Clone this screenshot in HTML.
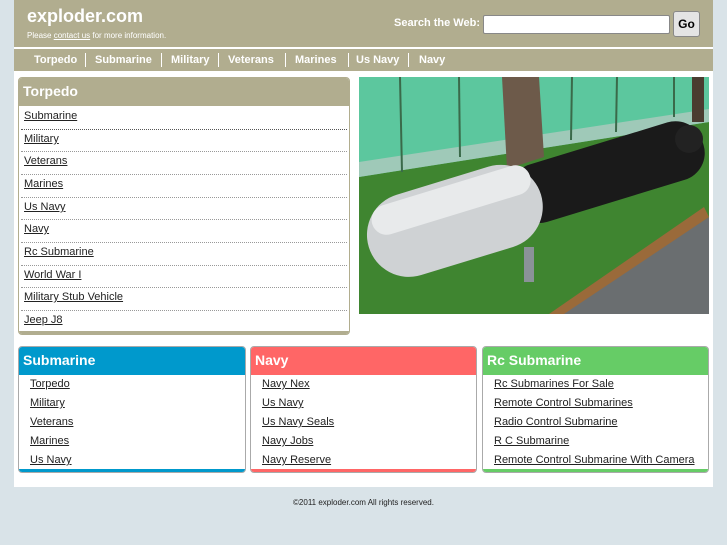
<!DOCTYPE html>
<html><head><style>
*{margin:0;padding:0;box-sizing:border-box}
body{width:727px;height:545px;background:#d9e3e8;font-family:"Liberation Sans",sans-serif;position:relative;overflow:hidden}
.abs{position:absolute}
#wrap{left:14px;top:0;width:699px;height:487px;background:#fff}
#hdr{left:0;top:0;width:699px;height:47px;background:#b1ad8f}
#nav{left:0;top:49px;width:699px;height:22px;background:#b1ad8f;font-size:11px;font-weight:bold;color:#fff;line-height:22px}
#nav span{position:absolute;top:0}
#nav i{position:absolute;top:4px;width:1px;height:14px;background:#fff}
a{color:#222;text-decoration:underline}
.box{border:1px solid #aaa;border-radius:4px;overflow:hidden;background:#fff}
.lt{position:absolute;left:5px;font-size:11px}
.row{position:absolute;left:2px;right:2px;height:0;border-top:1px dotted #999}
.bh{position:absolute;left:0;top:0;right:0;height:28px;color:#fff;font-size:14px;font-weight:bold;padding:5px 4px}
.bl{position:absolute;font-size:11px}
</style></head><body>
<div id="wrap" class="abs">
<div id="hdr" class="abs">
<div class="abs" style="left:13px;top:6px;font-size:18px;font-weight:bold;color:#fff">exploder.com</div>
<div class="abs" style="left:13px;top:31px;font-size:8px;color:#fff">Please <u>contact us</u> for more information.</div>
<div class="abs" style="left:380px;top:17px;font-size:11px;font-weight:bold;color:#fff">Search the Web:</div>
<div class="abs" style="left:469px;top:15px;width:187px;height:19px;background:#fff;border:1px solid #888;border-radius:2px"></div>
<div class="abs" style="left:659px;top:11px;width:27px;height:26px;background:#e4e4e4;border:1px solid #888;border-radius:3px;font-size:12px;font-weight:bold;line-height:24px;text-align:center">Go</div>
</div>
<div id="nav" class="abs">
<span style="left:20px">Torpedo</span><i style="left:71px"></i>
<span style="left:81px">Submarine</span><i style="left:147px"></i>
<span style="left:157px">Military</span><i style="left:204px"></i>
<span style="left:214px">Veterans</span><i style="left:271px"></i>
<span style="left:281px">Marines</span><i style="left:334px"></i>
<span style="left:342px">Us Navy</span><i style="left:394px"></i>
<span style="left:405px">Navy</span>
</div>
</div>

<div class="abs box" style="left:18px;top:77px;width:332px;height:258px;border-color:#b1ad8f">
<div class="abs" style="left:0;top:0;right:0;height:28px;background:#b1ad8f;color:#fff;font-size:14px;font-weight:bold;padding:5px 4px">Torpedo</div>
<div class="abs" style="left:0;bottom:0;right:0;height:3px;background:#b1ad8f"></div>
<a class="lt" style="top:32px">Submarine</a><div class="row" style="top:51px;border-top-color:#555"></div>
<a class="lt" style="top:55px">Military</a><div class="row" style="top:73px"></div>
<a class="lt" style="top:77px">Veterans</a><div class="row" style="top:96px"></div>
<a class="lt" style="top:100px">Marines</a><div class="row" style="top:119px"></div>
<a class="lt" style="top:123px">Us Navy</a><div class="row" style="top:141px"></div>
<a class="lt" style="top:145px">Navy</a><div class="row" style="top:164px"></div>
<a class="lt" style="top:168px">Rc Submarine</a><div class="row" style="top:187px"></div>
<a class="lt" style="top:191px">World War I</a><div class="row" style="top:209px"></div>
<a class="lt" style="top:213px">Military Stub Vehicle</a><div class="row" style="top:232px"></div>
<a class="lt" style="top:236px">Jeep J8</a>
</div>

<svg class="abs" style="left:359px;top:77px" width="350" height="237" viewBox="0 0 350 237">
<rect width="350" height="237" fill="#3f8530"/>
<polygon points="0,0 350,0 350,45 0,100" fill="#5cc79e"/>
<polygon points="0,85 350,32 350,45 0,100" fill="#9fc9b8"/>
<g stroke="#3a6a4a" stroke-width="2"><line x1="41" y1="0" x2="43" y2="95"/><line x1="100" y1="0" x2="101" y2="80"/><line x1="213" y1="0" x2="212" y2="63"/><line x1="258" y1="0" x2="257" y2="55"/><line x1="315" y1="0" x2="315" y2="40"/></g>
<polygon points="143,0 180,0 185,80 148,92" fill="#6d5a4a"/>
<rect x="333" y="0" width="12" height="45" fill="#4a3c30"/>
<polygon points="200,237 350,140 350,237" fill="#6a6e70"/>
<polygon points="190,237 345,130 350,140 205,237" fill="#9a6a3a"/>
<rect x="165" y="170" width="10" height="35" fill="#8a9298"/>
<g transform="translate(115,138) rotate(-17)">
<rect x="40" y="-32" width="200" height="60" rx="28" fill="#1a1a1a"/>
<rect x="-110" y="-42" width="180" height="84" rx="42" fill="#cfd2d4"/>
<rect x="-100" y="-36" width="165" height="30" rx="15" fill="#e8eaeb"/>
</g>
<circle cx="330" cy="62" r="14" fill="#222"/>
</svg>

<div class="abs box" style="left:18px;top:346px;width:228px;height:127px">
<div class="bh" style="background:#0099cc">Submarine</div>
<div class="abs" style="left:0;bottom:0;right:0;height:3px;background:#0099cc"></div>
<a class="bl" style="left:11px;top:31px">Torpedo</a>
<a class="bl" style="left:11px;top:50px">Military</a>
<a class="bl" style="left:11px;top:69px">Veterans</a>
<a class="bl" style="left:11px;top:88px">Marines</a>
<a class="bl" style="left:11px;top:107px">Us Navy</a>
</div>
<div class="abs box" style="left:250px;top:346px;width:227px;height:127px">
<div class="bh" style="background:#ff6666">Navy</div>
<div class="abs" style="left:0;bottom:0;right:0;height:3px;background:#ff6666"></div>
<a class="bl" style="left:11px;top:31px">Navy Nex</a>
<a class="bl" style="left:11px;top:50px">Us Navy</a>
<a class="bl" style="left:11px;top:69px">Us Navy Seals</a>
<a class="bl" style="left:11px;top:88px">Navy Jobs</a>
<a class="bl" style="left:11px;top:107px">Navy Reserve</a>
</div>
<div class="abs box" style="left:482px;top:346px;width:227px;height:127px">
<div class="bh" style="background:#66cc66">Rc Submarine</div>
<div class="abs" style="left:0;bottom:0;right:0;height:3px;background:#66cc66"></div>
<a class="bl" style="left:11px;top:31px">Rc Submarines For Sale</a>
<a class="bl" style="left:11px;top:50px">Remote Control Submarines</a>
<a class="bl" style="left:11px;top:69px">Radio Control Submarine</a>
<a class="bl" style="left:11px;top:88px">R C Submarine</a>
<a class="bl" style="left:11px;top:107px">Remote Control Submarine With Camera</a>
</div>
<div class="abs" style="left:0;width:727px;top:498px;text-align:center;font-size:8px;color:#222">©2011 exploder.com All rights reserved.</div>
</body></html>
